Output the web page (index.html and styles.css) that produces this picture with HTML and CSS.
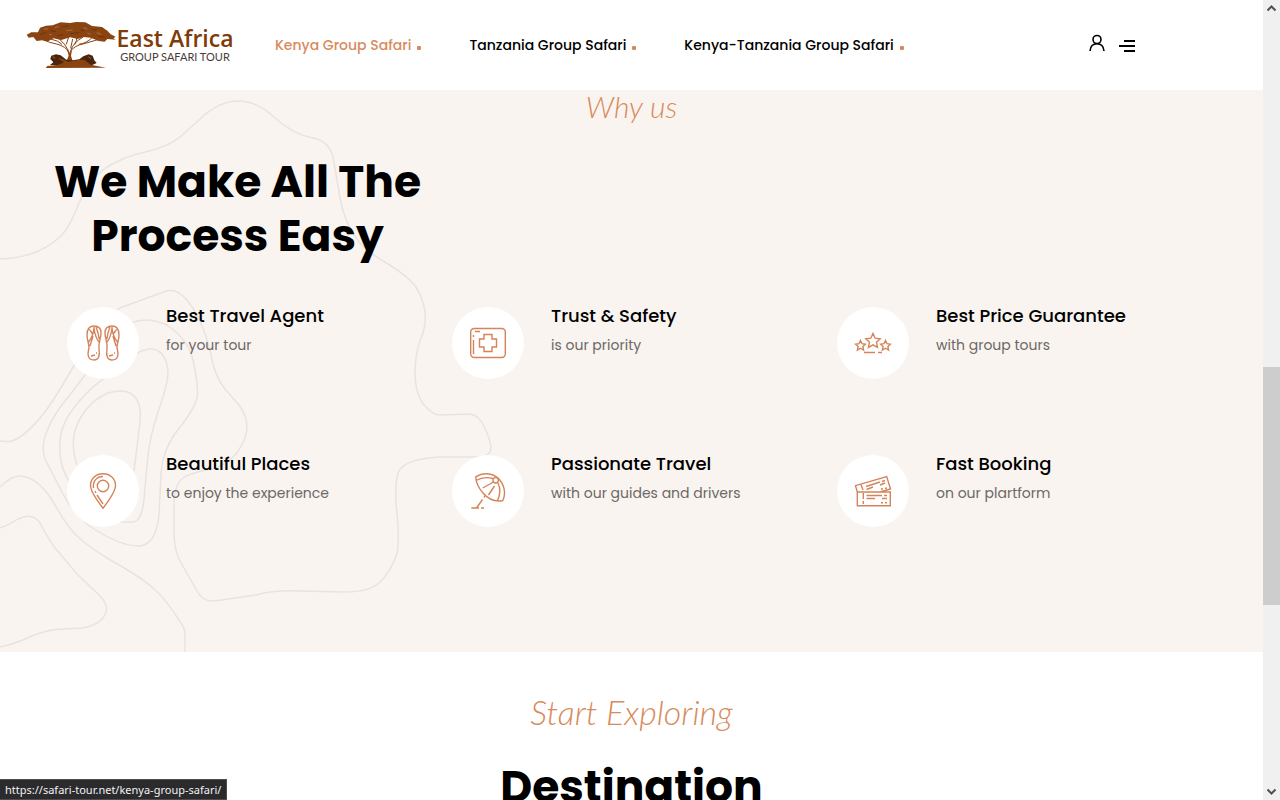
FILE: index.html
```html
<!DOCTYPE html>
<html lang="en">
<head>
    <meta charset="UTF-8">
    <meta name="viewport" content="width=device-width, initial-scale=1.0">
    <title>East Africa Group Safari Tour</title>
    <link rel="stylesheet" href="styles.css">
</head>
<body>
    <div class="page">
        <header class="header">
            <a href="#" class="logo">
                <svg class="logo-tree" viewBox="18 33 270 142" aria-hidden="true">
                    <path fill="#8a4412" d="M20 73 L34 66 L54 66 L60 52 L78 46 L98 45 L122 36 L150 38 L168 35 L196 36 L216 47 L246 50 L262 61 L272 72 L287 79 L280 84 L287 88 L262 86 L254 94 L236 92 L212 82 L190 80 L174 86 L150 81 L124 89 L100 84 L82 94 L66 90 L50 92 L40 80 L26 82 Z"/>
                    <path fill="none" stroke="#8a4412" stroke-width="3" d="M70 87 Q88 98 110 101 Q138 108 146 126 M92 86 Q116 91 126 102 M118 86 Q134 98 147 124 M146 80 L139 102 M149 128 Q158 106 196 99 Q220 92 240 86 M152 121 Q160 96 190 80 M164 103 Q172 88 170 80 M176 102 Q200 99 216 82 M152 114 L158 86"/>
                    <path fill="#8a4412" d="M142 120 L149 129 L156 118 L153 136 L158 153 L139 153 L146 136 Z"/>
                    <path fill="#4a250d" d="M91 146 L94 136 L108 132 L122 135 L139 148 L158 150 L178 147 L190 138 L206 132 L218 136 L223 150 L230 158 L217 164 L90 164 L100 156 Z"/>
                    <path fill="#8a4412" d="M112 143 L126 146 L144 154 L180 148 L193 148 L212 163 L258 172 L77 173 L82 167 L116 163 L132 156 Z"/>
                    <path fill="none" stroke="#c28350" stroke-width="2" d="M72 57 L84 55 M104 53 L116 48 M138 61 L158 59 M190 52 L202 56 M230 67 L244 72 M88 72 L96 74 M202 68 L212 72 M98 139 L106 144 M205 139 L213 145"/>
                    <path fill="none" stroke="#5a2a0a" stroke-width="2" d="M60 73 L78 66 M92 61 L108 64 M128 49 L146 47 M150 70 L178 67 M182 58 L192 62 M216 59 L230 58 M236 78 L254 80 M112 76 L130 73"/>
                </svg>
                <span class="logo-text">
                    <span class="logo-name">East Africa</span>
                    <span class="logo-sub">GROUP SAFARI TOUR</span>
                </span>
            </a>
            <nav class="nav">
                <a href="#" class="nav-link active">Kenya Group Safari</a>
                <a href="#" class="nav-link">Tanzania Group Safari</a>
                <a href="#" class="nav-link">Kenya-Tanzania Group Safari</a>
            </nav>
            <div class="actions">
                <button class="icon-button" aria-label="Account">
                    <svg viewBox="0 0 16 20" width="16" height="20" fill="none" stroke="#000" stroke-width="1.6">
                        <circle cx="8" cy="4.5" r="4"/>
                        <path d="M1 16 C1.4 11.5 4 8.8 8 8.8 C12 8.8 14.6 11.5 15 16"/>
                    </svg>
                </button>
                <button class="icon-button" aria-label="Menu">
                    <svg viewBox="0 0 16 20" width="16" height="20" stroke="#000" stroke-width="2">
                        <path d="M5 6 H16 M0 11 H16 M5 16 H16"/>
                    </svg>
                </button>
            </div>
        </header>

        <section class="why">
            <svg class="contours" viewBox="0 0 500 562" width="500" height="562" fill="none" stroke="#e9e3df" stroke-width="1.5" aria-hidden="true">
                <path d="M0 169 Q38 168 61 146 Q70 137 79 113 Q89 90 104 79 Q122 67 145 62 Q168 57 180 47 L200 29 Q219 11 238 11 Q257 11 274 27 Q292 44 313 48 Q329 51 333 67 L340 108 Q345 135 359 152 Q367 161 383 171 Q407 185 416 197 Q430 220 423 243 Q415 262 415 282 Q415 307 427 318 Q434 325 439 325 L470 324 Q479 325 485 338 Q491 352 491 359 Q489 367 480 367 L440 367 Q403 369 398 383 Q395 393 396 414 Q400 448 397 463 Q391 482 380 492 Q370 502 345 502 L300 501 Q274 500 256 505 L214 511 Q203 512 197 501 L180 471 Q174 460 174 441 V410 Q175 394 183 388 Q192 382 212 379 Q226 375 236 364 Q247 349 247 337 Q247 326 239 315 L225 299 Q215 287 211 265 Q204 232 187 210 Q177 198 166 201 L120 218 Q102 228 89 250 L62 296 Q34 343 12 351 Q6 352 0 351"/>
                <path d="M88 435 Q72 421 63 404 L48 375 Q39 360 47 341 Q54 323 70 305 L94 273 Q112 239 131 233 Q147 226 167 235 Q188 249 193 270 Q199 298 197 308 Q194 320 177 341 Q162 361 161 385 L159 425 Q156 456 138 456 Q119 456 88 435"/>
                <path d="M120 432 L134 432 Q142 430 144 409 L148 365 Q150 347 158 322 Q168 294 168 282 Q166 258 149 259 Q137 261 128 270 L93 297 Q72 317 65 332 Q57 349 61 371 Q64 387 77 403"/>
                <path d="M77 375 Q68 348 81 327 Q92 309 108 303 Q125 298 133 305 Q142 313 140 332 L134 381"/>
                <path d="M0 397 Q12 385 21 386 Q38 388 52 410 Q68 438 77 446 Q90 458 112 471 Q144 489 154 499 Q164 507 179 530 Q185 538 185 544 V562"/>
                <path d="M0 438 Q9 435 18 429 Q33 422 40 433 Q48 449 56 459 L77 484 L100 506 Q108 514 106 522 Q102 535 82 538 L63 539 Q49 539 32 546 Q12 555 0 557"/>
            </svg>

            <p class="script">Why us</p>
            <div class="container">
                <h2 class="heading">We Make All The<br>Process Easy</h2>
                <div class="features">
                    <div class="feature">
                        <div class="feature-icon">
                            <svg viewBox="0 0 36 36">
                                <path d="M9 1 C4 1 2 5 2 10 C2 15 4 18 4 23 C2 30 3 35 9 35 C14 35 15 30 14 24 C13 18 16 14 16 8 C16 3 13 1 9 1 Z M9 2 Q9 10 3 18 M8 10 Q5 4 4 5 M9 3 Q10 12 14 17 M11 2 Q14 10 14 14 M8 11 L5 21 M6 31 L10 30 M11 28 L12 28"/>
                                <path d="M27 1 C32 1 34 5 34 10 C34 15 32 18 32 23 C34 30 33 35 27 35 C22 35 21 30 22 24 C23 18 20 14 20 8 C20 3 23 1 27 1 Z M27 2 Q27 10 33 18 M28 10 Q31 4 32 5 M27 3 Q26 12 22 17 M25 2 Q22 10 22 14 M28 11 L31 21 M24 31 L28 30 M29 28 L30 28"/>
                            </svg>
                        </div>
                        <div>
                            <h3>Best Travel Agent</h3>
                            <p>for your tour</p>
                        </div>
                    </div>
                    <div class="feature">
                        <div class="feature-icon">
                            <svg viewBox="0 0 36 36">
                                <rect x="0.7" y="3.5" width="34.6" height="29" rx="3.5"/>
                                <path d="M14 9.5 H22 V14 H26.5 V22 H22 V26.5 H14 V22 H9.5 V14 H14 Z M3.5 29 V15 M3.5 12 V10 M5 6.5 H10"/>
                            </svg>
                        </div>
                        <div>
                            <h3>Trust &amp; Safety</h3>
                            <p>is our priority</p>
                        </div>
                    </div>
                    <div class="feature">
                        <div class="feature-icon">
                            <svg viewBox="0 0 36 36">
                                <path d="M18 8.5 L20.2 13.2 L25.2 13.7 L21.5 17.2 L22.5 22.4 L18 19.8 L13.5 22.4 L14.5 17.2 L10.8 13.7 L15.8 13.2 Z"/>
                                <path d="M5.5 15.5 L7 18.7 L10.4 19.2 L7.9 21.5 L8.6 25 L5.5 23.2 L2.4 25 L3.1 21.5 L0.6 19.2 L4 18.7 Z"/>
                                <path d="M30.5 15.5 L32 18.7 L35.4 19.2 L32.9 21.5 L33.6 25 L30.5 23.2 L27.4 25 L28.1 21.5 L25.6 19.2 L29 18.7 Z"/>
                                <path d="M9 27.5 H20 M23 27.5 H27"/>
                            </svg>
                        </div>
                        <div>
                            <h3>Best Price Guarantee</h3>
                            <p>with group tours</p>
                        </div>
                    </div>
                    <div class="feature">
                        <div class="feature-icon">
                            <svg viewBox="0 0 36 36">
                                <path d="M18 35.2 Q5.5 19 5.5 12.5 C5.5 5.5 11 0.7 18 0.7 C25 0.7 30.5 5.5 30.5 12.5 Q30.5 19 18 35.2 Z M18 31 L12 22 M11 20 L10 18 M8.5 15 C7.5 8 12 3.5 18 3.5"/>
                                <circle cx="18" cy="13" r="5.7"/>
                            </svg>
                        </div>
                        <div>
                            <h3>Beautiful Places</h3>
                            <p>to enjoy the experience</p>
                        </div>
                    </div>
                    <div class="feature">
                        <div class="feature-icon">
                            <svg viewBox="0 0 36 36">
                                <path d="M5.7 3.8 C13 -1 22 0 28 5 C34 11 36.5 20 32.7 27.7 C25 29 18 26 13 20 C8.5 15 6 10 5.7 3.8 Z M6 7.5 Q14 3 23 5.5 M23.5 9 L12.7 15 M24.5 13 L18.5 22 M28 10 Q32 18 27.5 27.5"/>
                                <circle cx="25.7" cy="7.3" r="2.7"/>
                                <path d="M15 22.5 L14 24.5 M12.5 26.5 L6.5 35 M1.3 35 H9 M11 35 H14"/>
                            </svg>
                        </div>
                        <div>
                            <h3>Passionate Travel</h3>
                            <p>with our guides and drivers</p>
                        </div>
                    </div>
                    <div class="feature">
                        <div class="feature-icon">
                            <svg viewBox="0 0 36 36">
                                <path d="M2.3 19 H35.3 V32.7 H2.3 Z M2.3 19 L0.5 12.7 L31.7 3.5 L35.5 16 L25 19 M6 11.5 L8 17"/>
                                <path d="M8.3 20 V26 M8.3 28 V31 M11.5 22.5 H27 M11.5 25.5 H20 M29 22.5 H32 M27 25.5 H32 M26 29.8 H28 M30 29.8 H32 M11 13.5 L25 9 M11.5 16.5 L18 14 M27 8.5 L30 7.5 M25 12 L30 10 M26 16 H28 M30 15.5 L32 15"/>
                            </svg>
                        </div>
                        <div>
                            <h3>Fast Booking</h3>
                            <p>on our plartform</p>
                        </div>
                    </div>
                </div>
            </div>
        </section>

        <section class="explore">
            <p class="script script-large">Start Exploring</p>
            <h2 class="heading">Destination</h2>
        </section>
    </div>

    <div class="scrollbar" aria-hidden="true">
        <svg viewBox="0 0 17 17" width="17" height="17"><path d="M4.5 10.5 L8.5 6.5 L12.5 10.5"/></svg>
        <div class="scroll-track">
            <div class="scroll-thumb"></div>
        </div>
        <svg viewBox="0 0 17 17" width="17" height="17"><path d="M4.5 6.5 L8.5 10.5 L12.5 6.5"/></svg>
    </div>

    <div class="status">https://safari-tour.net/kenya-group-safari/</div>
</body>
</html>
```

FILE: styles.css
```css
* {
    box-sizing: border-box;
}
body {
    margin: 0;
    display: flex;
    height: 100vh;
    overflow: hidden;
    font-family: Poppins, Inter, sans-serif;
    background-color: #fff;
    color: #000;
}
h2, h3, p {
    margin: 0;
}
a {
    color: inherit;
    text-decoration: none;
}
.page {
    flex: 1;
    min-width: 0;
}

/* header */
.header {
    display: flex;
    align-items: center;
    height: 90px;
    padding: 0 128px 0 26px;
    background-color: #fff;
}
.logo {
    display: flex;
    align-items: center;
}
.logo-tree {
    width: 90px;
    height: 48px;
}
.logo-text {
    display: flex;
    flex-direction: column;
    align-items: center;
    width: 118px;
    white-space: nowrap;
}
.logo-name {
    font-family: "Open Sans", sans-serif;
    font-weight: 600;
    font-size: 23px;
    line-height: 24px;
    color: #7f3b08;
}
.logo-sub {
    font-family: Lato, sans-serif;
    font-size: 11px;
    line-height: 14px;
    color: #4a3a38;
}
.nav {
    display: flex;
    gap: 48px;
    margin-left: 41px;
}
.nav-link {
    display: flex;
    align-items: baseline;
    gap: 6px;
    font-size: 14px;
    line-height: 24px;
    font-weight: 500;
    white-space: nowrap;
}
.nav-link::after {
    content: "";
    width: 4px;
    height: 4px;
    border-radius: 1px;
    background-color: #d98a5b;
}
.nav-link.active {
    color: #d98a5b;
}
.actions {
    display: flex;
    gap: 14px;
    margin-left: auto;
}
.icon-button {
    padding: 0;
    border: none;
    background: none;
    cursor: pointer;
}
.icon-button svg {
    display: block;
    overflow: visible;
}

/* why us */
.why {
    position: relative;
    padding-bottom: 49px;
    background-color: #f9f4f0;
}
.contours {
    position: absolute;
    top: 0;
    left: 0;
}
.script {
    font-family: Lato, cursive;
    font-style: italic;
    font-weight: 300;
    font-size: 30px;
    line-height: 32px;
    text-align: center;
    color: #d98a5b;
}
.script-large {
    font-size: 34px;
    line-height: 40px;
}
.container {
    position: relative;
    max-width: 1155px;
    margin: 33px auto 0;
}
.heading {
    font-size: 44px;
    line-height: 54px;
    font-weight: 700;
    text-align: center;
}
.container .heading {
    width: fit-content;
}
.features {
    display: grid;
    grid-template-columns: repeat(3, 1fr);
    row-gap: 76px;
    margin-top: 44px;
    padding-bottom: 76px;
}
.feature {
    display: flex;
    gap: 27px;
    padding-left: 13px;
}
.feature-icon {
    display: flex;
    flex-shrink: 0;
    align-items: center;
    justify-content: center;
    width: 72px;
    height: 72px;
    border-radius: 50%;
    background-color: #fff;
}
.feature-icon svg {
    width: 36px;
    height: 36px;
    overflow: visible;
    fill: none;
    stroke: #d4845a;
    stroke-width: 1.4;
}
.feature h3 {
    font-size: 18px;
    line-height: 18px;
    font-weight: 500;
}
.feature p {
    margin-top: 8px;
    font-size: 14px;
    line-height: 24px;
    color: #6c6865;
}

/* destinations */
.explore {
    padding-top: 40px;
}
.explore .heading {
    margin-top: 28px;
}

/* window scrollbar */
.scrollbar {
    display: flex;
    flex-direction: column;
    width: 17px;
    background-color: #f0f0f0;
}
.scrollbar svg {
    fill: none;
    stroke: #505050;
    stroke-width: 2;
}
.scroll-track {
    flex: 1;
    padding-top: 350px;
}
.scroll-thumb {
    height: 238px;
    background-color: #cdcdcd;
}

/* link address */
.status {
    position: fixed;
    left: 0;
    bottom: 0;
    padding: 0 5px;
    border: 1px solid #4d4d4d;
    border-left: none;
    background-color: #2b2a2d;
    color: #f2f2f2;
    font-family: "Noto Sans", sans-serif;
    font-size: 11px;
    line-height: 19px;
}
```
